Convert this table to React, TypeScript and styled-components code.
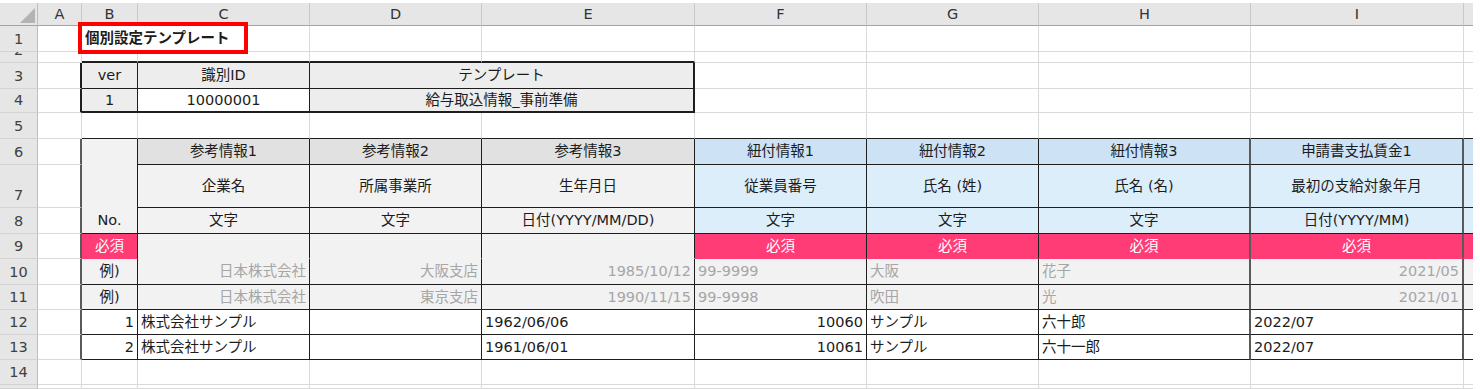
import React from 'react';
import styled, { createGlobalStyle } from 'styled-components';

const FONT = `"DejaVu Sans", "Noto Sans CJK JP", sans-serif`;

const GlobalStyle = createGlobalStyle`
  html, body { margin: 0; padding: 0; background: #ffffff; }
  body { font-family: ${FONT}; }
`;

const COLS = ['A', 'B', 'C', 'D', 'E', 'F', 'G', 'H', 'I', 'J'];
const COL_W = [44, 56, 172, 172, 213, 172, 172, 212, 213, 9];
const ROW_H = [26, 11, 26, 24, 26, 26, 43, 26, 25, 26, 25, 25, 25, 25, 4];
const HEAD_H = 23;
const ROWHEAD_W = 38;

const GRID = '#dadada';
const LINE = '#1e1e1e';
const BOX_GRAY = '#ededed';
const GRAY_H = '#e1e1e1';
const GRAY = '#f2f2f2';
const BLUE_H = '#cde2f5';
const BLUE = '#ddeefb';
const PINK = '#ff3c76';
const MUTED = '#a6a6a6';
const INK = '#1c1c1c';

type Align = 'left' | 'center' | 'right';
type VAlign = 'center' | 'bottom';
type Spec = { t?: string; bg?: string; fg?: string; al?: Align; va?: VAlign; b?: boolean; cs?: number; rs?: number };
type Edge = { w: number; c: string };

const S: Record<string, Spec> = {};
const set = (k: string, s: Spec) => {
  S[k] = s;
};

set('B1', { t: '個別設定テンプレート', b: true, al: 'left', cs: 2 });
set('B3', { t: 'ver', bg: BOX_GRAY });
set('C3', { t: '識別ID', bg: BOX_GRAY });
set('D3', { t: 'テンプレート', bg: BOX_GRAY, cs: 2 });
set('B4', { t: '1', bg: BOX_GRAY });
set('C4', { t: '10000001' });
set('D4', { t: '給与取込情報_事前準備', bg: BOX_GRAY, cs: 2 });

set('B6', { t: 'No.', bg: GRAY, va: 'bottom', rs: 3 });
const heads = ['参考情報1', '参考情報2', '参考情報3', '紐付情報1', '紐付情報2', '紐付情報3', '申請書支払賃金1', ''];
const names = ['企業名', '所属事業所', '生年月日', '従業員番号', '氏名 (姓)', '氏名 (名)', '最初の支給対象年月', ''];
const types = ['文字', '文字', '日付(YYYY/MM/DD)', '文字', '文字', '文字', '日付(YYYY/MM)', ''];
const ex1: [string, Align][] = [
  ['日本株式会社', 'right'], ['大阪支店', 'right'], ['1985/10/12', 'right'], ['99-9999', 'left'],
  ['大阪', 'left'], ['花子', 'left'], ['2021/05', 'right'], ['', 'left'],
];
const ex2: [string, Align][] = [
  ['日本株式会社', 'right'], ['東京支店', 'right'], ['1990/11/15', 'right'], ['99-9998', 'left'],
  ['吹田', 'left'], ['光', 'left'], ['2021/01', 'right'], ['', 'left'],
];
const d1: [string, Align][] = [
  ['株式会社サンプル', 'left'], ['', 'left'], ['1962/06/06', 'left'], ['10060', 'right'],
  ['サンプル', 'left'], ['六十郎', 'left'], ['2022/07', 'left'], ['', 'left'],
];
const d2: [string, Align][] = [
  ['株式会社サンプル', 'left'], ['', 'left'], ['1961/06/01', 'left'], ['10061', 'right'],
  ['サンプル', 'left'], ['六十一郎', 'left'], ['2022/07', 'left'], ['', 'left'],
];
COLS.slice(2).forEach((col, i) => {
  const blue = i >= 3;
  set(`${col}6`, { t: heads[i], bg: blue ? BLUE_H : GRAY_H });
  set(`${col}7`, { t: names[i], bg: blue ? BLUE : GRAY });
  set(`${col}8`, { t: types[i], bg: blue ? BLUE : GRAY });
  set(`${col}9`, blue ? { t: i < 7 ? '必須' : '', bg: PINK, fg: '#ffffff' } : { bg: GRAY });
  set(`${col}10`, { t: ex1[i][0], al: ex1[i][1], bg: GRAY, fg: MUTED });
  set(`${col}11`, { t: ex2[i][0], al: ex2[i][1], bg: GRAY, fg: MUTED });
  set(`${col}12`, { t: d1[i][0], al: d1[i][1] });
  set(`${col}13`, { t: d2[i][0], al: d2[i][1] });
});
set('B9', { t: '必須', bg: PINK, fg: '#ffffff' });
set('B10', { t: '例)', bg: GRAY });
set('B11', { t: '例)', bg: GRAY });
set('B12', { t: '1', al: 'right' });
set('B13', { t: '2', al: 'right' });

const inBox1 = (r: number, c: number) => r >= 3 && r <= 4 && c >= 1 && c <= 4;
const inBox2 = (r: number, c: number) => r >= 6 && r <= 13 && c >= 1 && c <= 9;

function vEdge(r: number, c: number): Edge {
  if (c === 9) return { w: 0, c: 'transparent' };
  const a1 = inBox1(r, c);
  const b1 = inBox1(r, c + 1);
  if (a1 || b1) return { w: a1 && b1 ? 1 : 2, c: LINE };
  const a2 = inBox2(r, c);
  const b2 = inBox2(r, c + 1);
  if (a2 || b2) return c === 0 || c === 7 || c === 8 ? { w: 2, c: '#5a5a5a' } : { w: 1, c: LINE };
  return { w: 1, c: GRID };
}

function hEdge(r: number, c: number, bg?: string): Edge {
  const a1 = inBox1(r, c);
  const b1 = inBox1(r + 1, c);
  if (a1 || b1) return { w: a1 && b1 ? 1 : 2, c: LINE };
  const a2 = inBox2(r, c);
  const b2 = inBox2(r + 1, c);
  if (a2 || b2) {
    if (r === 9 && a2 && b2) return { w: 1, c: bg || GRID };
    return { w: 1, c: LINE };
  }
  return { w: 1, c: GRID };
}

const Frame = styled.div`
  position: relative;
  padding-top: 3px;
`;

const Sheet = styled.div<{ $cols: string; $rows: string }>`
  display: grid;
  grid-template-columns: ${(p) => p.$cols};
  grid-template-rows: ${(p) => p.$rows};
  width: max-content;
  font-family: ${FONT};
`;

const Corner = styled.div`
  grid-column: 1;
  grid-row: 1;
  box-sizing: border-box;
  background: #e6e6e6;
  border-right: 1px solid #bdbdbd;
  border-bottom: 1px solid #a3a3a3;
  display: flex;
  align-items: flex-end;
  justify-content: flex-end;
  padding: 0 2px 2px 0;
`;

const ColHead = styled.div<{ $c: number; $last: boolean }>`
  grid-column: ${(p) => p.$c};
  grid-row: 1;
  box-sizing: border-box;
  background: #e6e6e6;
  border-right: ${(p) => (p.$last ? 'none' : '1px solid #c9c9c9')};
  border-bottom: 1px solid #a3a3a3;
  display: flex;
  align-items: center;
  justify-content: center;
  font-size: 14.5px;
  color: #333333;
  overflow: hidden;
`;

const RowHead = styled.div<{ $r: number }>`
  grid-column: 1;
  grid-row: ${(p) => p.$r};
  box-sizing: border-box;
  background: #e6e6e6;
  border-right: 1px solid #bdbdbd;
  border-bottom: 1px solid #d3d3d3;
  display: flex;
  align-items: flex-end;
  justify-content: center;
  padding-bottom: 3px;
  font-size: 14.5px;
  line-height: 17px;
  color: #404040;
  overflow: hidden;
`;

const Cell = styled.div<{
  $c: number;
  $r: number;
  $cs: number;
  $rs: number;
  $bg: string;
  $fg: string;
  $al: Align;
  $va: VAlign;
  $bold: boolean;
  $right: Edge;
  $bottom: Edge;
}>`
  grid-column: ${(p) => p.$c} / span ${(p) => p.$cs};
  grid-row: ${(p) => p.$r} / span ${(p) => p.$rs};
  box-sizing: border-box;
  min-width: 0;
  min-height: 0;
  display: flex;
  justify-content: ${(p) => (p.$al === 'left' ? 'flex-start' : p.$al === 'right' ? 'flex-end' : 'center')};
  align-items: ${(p) => (p.$va === 'bottom' ? 'flex-end' : 'center')};
  padding: 0 3px ${(p) => (p.$va === 'bottom' ? '4px' : '0')} 3px;
  background: ${(p) => p.$bg};
  color: ${(p) => p.$fg};
  font-size: 14.5px;
  line-height: 17px;
  font-weight: ${(p) => (p.$bold ? 700 : 400)};
  border-right: ${(p) => `${p.$right.w}px solid ${p.$right.c}`};
  border-bottom: ${(p) => `${p.$bottom.w}px solid ${p.$bottom.c}`};
  white-space: nowrap;
  overflow: hidden;
`;

const Callout = styled.div`
  position: absolute;
  left: 78px;
  top: 22px;
  width: 170px;
  height: 32px;
  box-sizing: border-box;
  border: 4px solid #ff0000;
  pointer-events: none;
`;

export default function App() {
  const cols = `${ROWHEAD_W}px ${COL_W.map((w) => `${w}px`).join(' ')}`;
  const rows = `${HEAD_H}px ${ROW_H.map((h) => `${h}px`).join(' ')}`;

  const covered = new Set<string>();
  Object.entries(S).forEach(([k, s]) => {
    const ci = COLS.indexOf(k[0]);
    const r = parseInt(k.slice(1), 10);
    const cs = s.cs || 1;
    const rs = s.rs || 1;
    for (let dr = 0; dr < rs; dr++)
      for (let dc = 0; dc < cs; dc++) if (dr || dc) covered.add(`${COLS[ci + dc]}${r + dr}`);
  });

  const nodes: React.ReactNode[] = [];
  nodes.push(
    <Corner key="corner">
      <svg width="15" height="15" viewBox="0 0 15 15">
        <polygon points="15,0 15,15 0,15" fill="#b3b3b3" />
      </svg>
    </Corner>
  );
  COLS.forEach((col, ci) => {
    nodes.push(
      <ColHead key={`h${col}`} $c={ci + 2} $last={ci === COLS.length - 1}>
        {ci === COLS.length - 1 ? '' : col}
      </ColHead>
    );
  });
  ROW_H.forEach((h, ri) => {
    const r = ri + 1;
    nodes.push(
      <RowHead key={`r${r}`} $r={r + 1}>
        {h >= 10 ? r : ''}
      </RowHead>
    );
    COLS.forEach((col, ci) => {
      const key = `${col}${r}`;
      if (covered.has(key)) return;
      const s = S[key] || {};
      const cs = s.cs || 1;
      const rs = s.rs || 1;
      nodes.push(
        <Cell
          key={key}
          $c={ci + 2}
          $r={r + 1}
          $cs={cs}
          $rs={rs}
          $bg={s.bg || '#ffffff'}
          $fg={s.fg || INK}
          $al={s.al || 'center'}
          $va={s.va || 'center'}
          $bold={!!s.b}
          $right={vEdge(r, ci + cs - 1)}
          $bottom={hEdge(r + rs - 1, ci, s.bg)}
        >
          {s.t || ''}
        </Cell>
      );
    });
  });

  return (
    <>
      <GlobalStyle />
      <Frame>
        <Sheet $cols={cols} $rows={rows}>
          {nodes}
        </Sheet>
        <Callout />
      </Frame>
    </>
  );
}
